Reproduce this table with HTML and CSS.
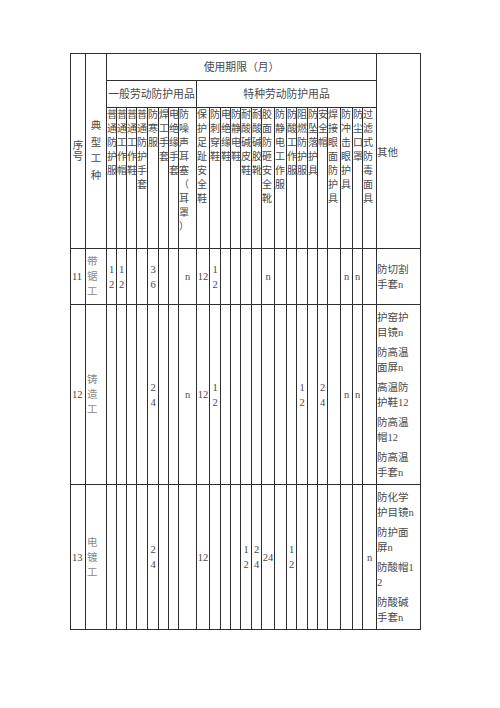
FILE: index.html
```html
<!DOCTYPE html>
<html lang="zh-CN">
<head>
<meta charset="utf-8">
<title>劳动防护用品使用期限</title>
<link rel="stylesheet" href="styles.css">
</head>
<body>
<div class="page">
<table class="ppe">
<colgroup>
<col><col><col><col><col><col><col><col><col><col><col><col><col><col><col><col><col><col><col><col><col><col><col><col><col><col><col>
</colgroup>
<thead>
<tr class="r1">
<th rowspan="3" class="seq">序号</th>
<th rowspan="3" class="type">典型工种</th>
<th colspan="24" class="group">使用期限（月）</th>
<th rowspan="3" class="other-h">其他</th>
</tr>
<tr class="r2">
<th colspan="8" class="group">一般劳动防护用品</th>
<th colspan="16" class="group">特种劳动防护用品</th>
</tr>
<tr class="r3">
<th class="v">普通防护服</th>
<th class="v">普通工作帽</th>
<th class="v">普通工作鞋</th>
<th class="v">普通防护手套</th>
<th class="v">防寒服</th>
<th class="v">焊工手套</th>
<th class="v">电绝缘手套</th>
<th class="v v-wide">防噪声耳塞（耳罩）</th>
<th class="v">保护足趾安全鞋</th>
<th class="v">防刺穿鞋</th>
<th class="v">电绝缘鞋</th>
<th class="v">防静电鞋</th>
<th class="v">耐酸碱皮鞋</th>
<th class="v">耐酸碱胶靴</th>
<th class="v">胶面防砸安全靴</th>
<th class="v">防静电工作服</th>
<th class="v">防酸工作服</th>
<th class="v">阻燃防护服</th>
<th class="v">防坠落护具</th>
<th class="v">安全帽</th>
<th class="v">焊接眼面防护具</th>
<th class="v">防冲击眼护具</th>
<th class="v">防尘口罩</th>
<th class="v">过滤式防毒面具</th>
</tr>
</thead>
<tbody>
<tr class="row-a">
<td class="num">11</td>
<td class="job">带锯工</td>
<td>12</td><td>12</td><td></td><td></td><td>36</td><td></td><td></td><td>n</td>
<td>12</td><td>12</td><td></td><td></td><td></td><td></td><td>n</td><td></td>
<td></td><td></td><td></td><td></td><td></td><td>n</td><td>n</td><td></td>
<td class="other"><p>防切割手套n</p></td>
</tr>
<tr class="row-b">
<td class="num">12</td>
<td class="job">铸造工</td>
<td></td><td></td><td></td><td></td><td>24</td><td></td><td></td><td>n</td>
<td>12</td><td>12</td><td></td><td></td><td></td><td></td><td></td><td></td>
<td></td><td>12</td><td></td><td>24</td><td></td><td>n</td><td>n</td><td></td>
<td class="other"><p>护窑护目镜n</p><p>防高温面屏n</p><p>高温防护鞋12</p><p>防高温帽12</p><p>防高温手套n</p></td>
</tr>
<tr class="row-c">
<td class="num">13</td>
<td class="job">电镀工</td>
<td></td><td></td><td></td><td></td><td>24</td><td></td><td></td><td></td>
<td>12</td><td></td><td></td><td></td><td>12</td><td>24</td><td>24</td><td></td>
<td>12</td><td></td><td></td><td></td><td></td><td></td><td></td><td>n</td>
<td class="other"><p>防化学护目镜n</p><p>防护面屏n</p><p>防酸帽12</p><p>防酸碱手套n</p></td>
</tr>
</tbody>
</table>
</div>
</body>
</html>
```
FILE: styles.css
```css
html, body {
  margin: 0;
  background: #fff;
}

body {
  font-family: "Liberation Serif", "Noto Sans CJK SC", serif;
  font-size: 10.5px;
  color: #4a4a4a;
}

.page {
  padding: 53px 0 0 70px;
}

.ppe {
  border-collapse: collapse;
  table-layout: fixed;
  width: 351px;
}

.ppe col:nth-child(1) { width: 15px; }
.ppe col:nth-child(2) { width: 21px; }
.ppe col:nth-child(3) { width: 10px; }
.ppe col:nth-child(4) { width: 10px; }
.ppe col:nth-child(5) { width: 10px; }
.ppe col:nth-child(6) { width: 11px; }
.ppe col:nth-child(7) { width: 11px; }
.ppe col:nth-child(8) { width: 10px; }
.ppe col:nth-child(9) { width: 10px; }
.ppe col:nth-child(10) { width: 18px; }
.ppe col:nth-child(11) { width: 13px; }
.ppe col:nth-child(12) { width: 11px; }
.ppe col:nth-child(13) { width: 10px; }
.ppe col:nth-child(14) { width: 10px; }
.ppe col:nth-child(15) { width: 11px; }
.ppe col:nth-child(16) { width: 10px; }
.ppe col:nth-child(17) { width: 13px; }
.ppe col:nth-child(18) { width: 12px; }
.ppe col:nth-child(19) { width: 10px; }
.ppe col:nth-child(20) { width: 11px; }
.ppe col:nth-child(21) { width: 10px; }
.ppe col:nth-child(22) { width: 10px; }
.ppe col:nth-child(23) { width: 13px; }
.ppe col:nth-child(24) { width: 12px; }
.ppe col:nth-child(25) { width: 10px; }
.ppe col:nth-child(26) { width: 14px; }
.ppe col:nth-child(27) { width: 44px; }

.ppe th,
.ppe td {
  border: 1px solid #2e2e2e;
  padding: 0;
  font-weight: normal;
  word-break: break-all;
  line-break: anywhere;
  text-spacing-trim: space-all;
}

.r1, .r2 { height: 27px; }
.r3 { height: 141px; }
.row-a { height: 56px; }
.row-b { height: 180px; }
.row-c { height: 145px; }

.group {
  text-align: center;
  vertical-align: middle;
  line-height: 14px;
  font-size: 10.8px;
}

.seq {
  text-align: center;
  vertical-align: middle;
  line-height: 11px;
  padding: 4px 1px 0 0;
}

.type {
  text-align: center;
  vertical-align: middle;
  line-height: 16.5px;
  padding: 4px 3px 0 2px;
}

.other-h {
  text-align: left;
  vertical-align: middle;
  padding: 0 2px 0 1px;
}

.v {
  text-align: left;
  vertical-align: top;
  font-size: 10px;
  line-height: 14px;
  padding: 10px 0 0 0.5px;
}

.v-wide {
  padding-left: 1.5px;
  padding-right: 4px;
}

.ppe td {
  text-align: center;
  vertical-align: middle;
  line-height: 15px;
}

.ppe td.num {
  text-align: left;
  padding-left: 1px;
}

.ppe td.job {
  text-align: left;
  color: #8a8a8a;
  padding: 0 4px 0 1px;
}

.ppe td.other {
  text-align: left;
  padding: 0 3px 0 0;
}

.other p {
  margin: 0;
}

.other p + p {
  margin-top: 5px;
}
```
